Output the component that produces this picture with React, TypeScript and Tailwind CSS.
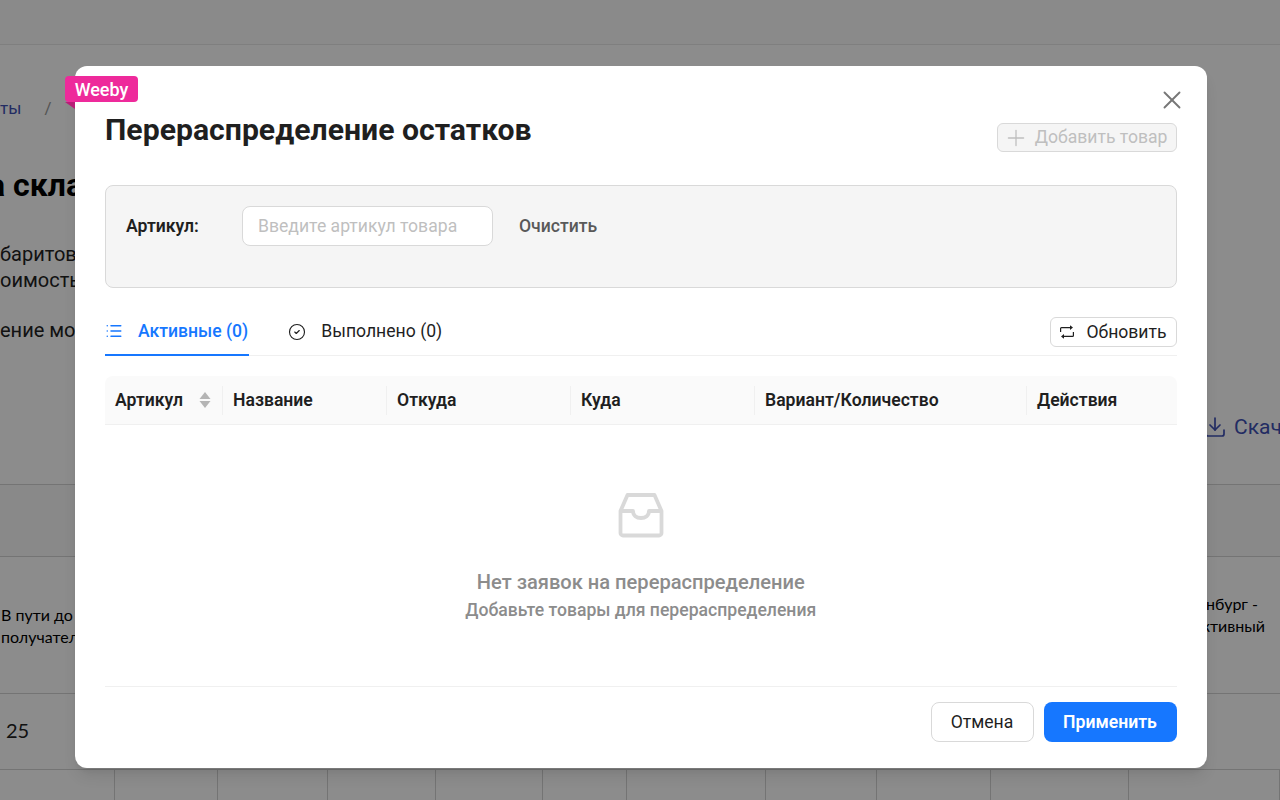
import { X, Plus, List, CircleCheck, Download } from "lucide-react";

const columns = [
  { title: "Артикул", width: "w-[118px]", sort: true },
  { title: "Название", width: "w-[164px]" },
  { title: "Откуда", width: "w-[184px]" },
  { title: "Куда", width: "w-[184px]" },
  { title: "Вариант/Количество", width: "w-[272px]" },
  { title: "Действия", width: "flex-1" },
];

const bottomCols = ["w-[115px]", "w-[103px]", "w-[110px]", "w-[108px]", "w-[107px]", "w-[84px]", "w-[139px]", "w-[111px]", "w-[114px]", "w-[138px]", "flex-1"];

function Background() {
  return (
    <div className="h-[800px] overflow-hidden bg-white font-['Roboto',sans-serif]">
      <div className="h-[45px] border-b border-[#e8e8e8] bg-[#fbfbfb]" />
      <div className="mt-[52px] flex h-6 items-center text-[17px] text-[#3f51b5]">
        <span className="-ml-[38px]">Отчёты</span>
        <span className="ml-[23px] text-[#999]">/</span>
      </div>
      <h1 className="-ml-[12px] mt-[44px] text-[32px] font-bold leading-10 text-black">а склада</h1>
      <div className="mt-[36px] text-[20px] leading-[26px] text-[#222]">
        <p>баритов</p>
        <p>оимость</p>
        <p className="mt-6">ение мо</p>
      </div>
      <div className="mt-[72px] flex justify-end text-[21px] leading-6 text-[#3f51b5]">
        <div className="flex w-[77px] items-center gap-[7px]">
          <Download size={24} strokeWidth={1.7} className="shrink-0" />
          <span>Скачать</span>
        </div>
      </div>
      <div className="mt-[45px] h-[73px] border-y border-[#d4d4d4] bg-[#f9f9f9]" />
      <div className="flex h-[137px] items-center justify-between border-b border-[#d4d4d4] pl-px font-['Lato',sans-serif] text-[16px] leading-[22px] text-black">
        <div className="mt-[2px]">
          <p>В пути до</p>
          <p>получателя</p>
        </div>
        <div className="-mt-[20px] text-right">
          <p className="pr-[22px]">нбург -</p>
          <p className="pr-[15px]">активный</p>
        </div>
      </div>
      <div className="flex h-[76px] items-center border-b border-[#d4d4d4] pb-[4px] pl-[6px] font-['Lato',sans-serif] text-[20px] text-[#222]">25</div>
      <div className="flex h-8">
        {bottomCols.map((w, i) => (
          <div key={i} className={`${w} border-r border-[#d4d4d4]`} />
        ))}
      </div>
    </div>
  );
}

function Modal() {
  return (
    <div className="absolute left-[75px] top-[66px] flex h-[702px] w-[1132px] flex-col rounded-xl bg-white pb-[26px] pl-[30px] pr-[30.5px] font-['Roboto',sans-serif] shadow-lg">
      <div className="absolute -left-[10px] top-[10px] flex h-[26px] w-[73px] items-center justify-center rounded-[4px] bg-[#ee2a9b] text-[18px] font-medium text-white">
        Weeby
      </div>
      <div className="absolute -left-[10px] top-[36px] h-0 w-0 border-l-[10px] border-t-[7px] border-l-transparent border-t-[#b81e78]" />
      <X size={30} strokeWidth={1.5} className="absolute right-[20px] top-[19px] text-[#777]" />

      <div className="flex h-[119px] justify-between">
        <h2 className="mt-[44px] text-[30.2px] font-bold leading-10 text-[#1f1f1f]">Перераспределение остатков</h2>
        <button className="mt-[57px] flex h-[29px] w-[180px] items-center justify-end gap-[6px] rounded-md border border-[#d9d9d9] bg-[#f5f5f5] pr-[8px] text-[17.6px] text-[#bfbfbf]">
          <Plus size={26} strokeWidth={1.2} />
          Добавить товар
        </button>
      </div>

      <div className="flex h-[103px] items-start rounded-lg border border-[#d9d9d9] bg-[#f5f5f5] px-5 pt-5">
        <span className="flex h-10 w-[116px] items-center text-[17.6px] font-semibold text-[#1f1f1f]">Артикул:</span>
        <input
          placeholder="Введите артикул товара"
          className="h-10 w-[251px] rounded-lg border border-[#d9d9d9] bg-white px-[15px] text-[17.6px] outline-none placeholder:text-[#bfbfbf]"
        />
        <span className="ml-[26px] flex h-10 items-center text-[17.6px] font-medium text-[#595959]">Очистить</span>
      </div>

      <div className="mt-[29px] flex h-[39px] items-start justify-between border-b border-[#f0f0f0]">
        <div className="flex">
          <div className="flex h-[39px] items-center gap-[15px] border-b-2 border-[#1677ff] pb-[9px] pr-px text-[17.6px] font-medium text-[#1677ff]">
            <List size={18} strokeWidth={2} />
            Активные (0)
          </div>
          <div className="ml-[39px] flex h-[39px] items-center gap-[15px] pb-[10px] text-[17.6px] text-[#1f1f1f]">
            <CircleCheck size={18} strokeWidth={1.5} />
            Выполнено (0)
          </div>
        </div>
        <button className="flex h-[30px] w-[127px] items-center justify-center gap-[11px] rounded-md border border-[#d9d9d9] bg-white text-[17.6px] text-[#1f1f1f]">
          <svg width="16" height="14" viewBox="0 0 16 14" fill="#1f1f1f">
            <path d="M1 7V3.500A1.500 1.500 0 0 1 2.500 2H11v1.200H2.500a.3.3 0 0 0-.3.3V7z" />
            <path d="M11 .3 14 2.600 11 4.900z" />
            <path d="M15 7v3.500a1.500 1.500 0 0 1-1.500 1.500H5v-1.200h8.500a.3.3 0 0 0 .3-.3V7z" />
            <path d="M5 9.100 2 11.400l3 2.300z" />
          </svg>
          Обновить
        </button>
      </div>

      <div className="mt-5 flex h-[49px] rounded-t-lg border-b border-[#f0f0f0] bg-[#fafafa] text-[17.6px] font-semibold text-[#1f1f1f]">
        {columns.map((col, i) => (
          <div key={col.title} className={`${col.width} flex items-center`}>
            <div className={`flex h-[29px] w-full items-center pl-[10px] ${i < columns.length - 1 ? "border-r border-[#f0f0f0]" : ""}`}>
              {col.title}
              {col.sort && (
                <svg width="12" height="18" viewBox="0 0 12 18" className="ml-auto mr-[11px]" fill="#b5b5b5">
                  <path d="M6 1 11.500 8H.5z" />
                  <path d="M6 17 .5 10h11z" />
                </svg>
              )}
            </div>
          </div>
        ))}
      </div>

      <div className="flex flex-1 flex-col items-center border-b border-[#f0f0f0] pt-[67px]">
        <svg width="46" height="46" viewBox="0 0 46 46" fill="none" stroke="#d9d9d9" strokeWidth="3.800" strokeLinejoin="round">
          <path d="M2.500 19 9.500 3h27l7 16v22a2.500 2.500 0 0 1-2.500 2.500H5A2.500 2.500 0 0 1 2.500 41z" />
          <path d="M2.500 19H15c0 4.500 3.500 7 8 7s8-2.500 8-7h12.500" />
        </svg>
        <p className="mt-[30px] text-[20.1px] font-medium leading-7 text-[#8c8c8c]">Нет заявок на перераспределение</p>
        <p className="text-[17.6px] font-medium leading-7 text-[#8c8c8c]">Добавьте товары для перераспределения</p>
      </div>

      <div className="mt-[15px] flex justify-end gap-[10px] text-[17.6px]">
        <button className="h-10 w-[103px] rounded-lg border border-[#d9d9d9] bg-white text-[#1f1f1f]">Отмена</button>
        <button className="h-10 w-[133px] rounded-lg bg-[#1677ff] font-semibold text-white">Применить</button>
      </div>
    </div>
  );
}

export default function App() {
  return (
    <div className="relative h-[800px] w-full overflow-hidden">
      <Background />
      <div className="absolute inset-0 bg-black/45" />
      <Modal />
    </div>
  );
}
